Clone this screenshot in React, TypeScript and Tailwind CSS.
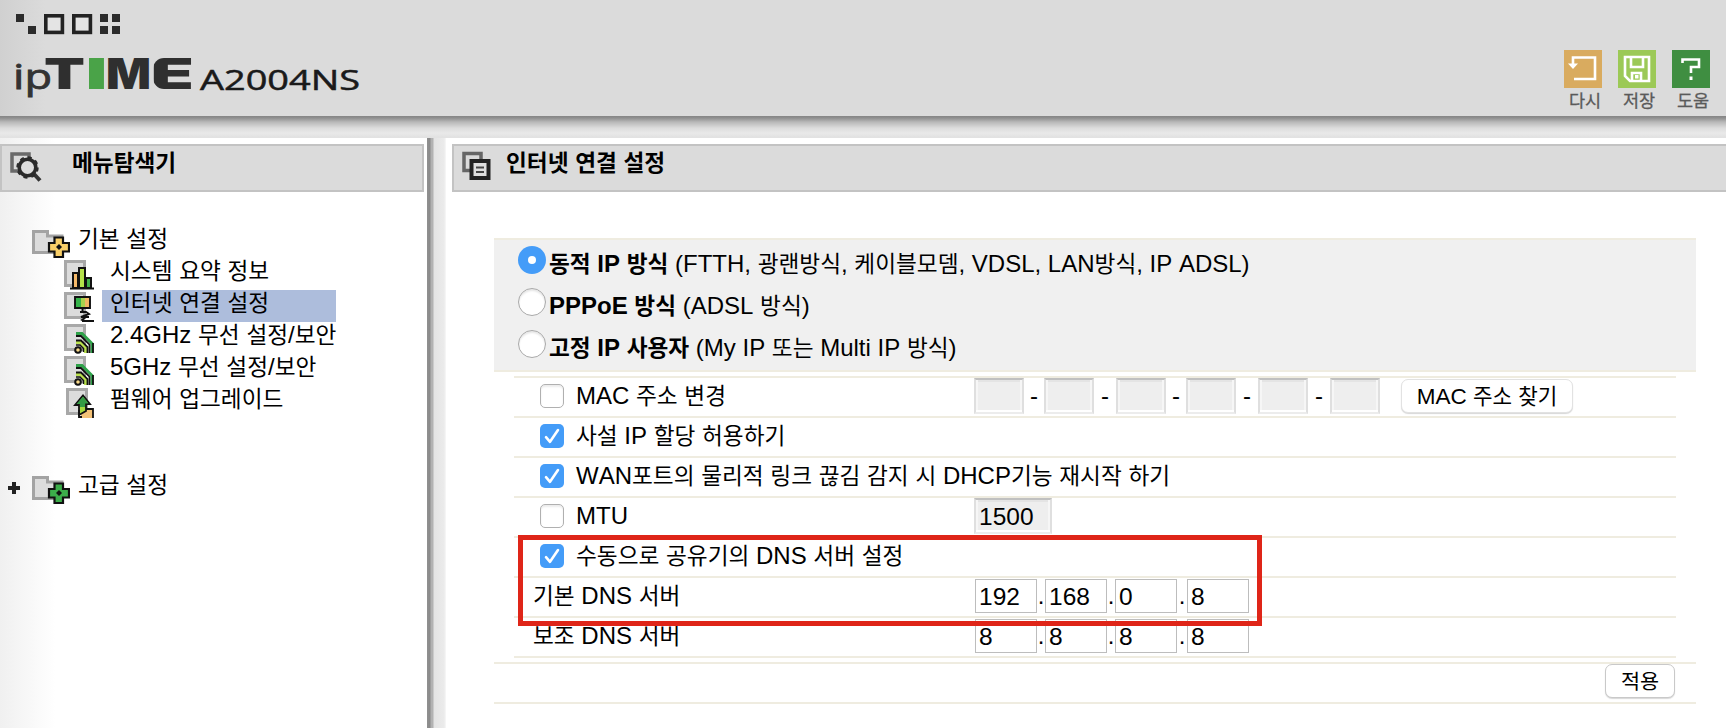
import type { ReactNode } from "react";

/* Hangul runs are set in Noto Sans CJK, slightly smaller than the Latin text beside them. */
function T({ children }: { children: string }) {
  return (
    <>
      {children.split(/([가-힣]+)/).map((part, i) =>
        i % 2 ? (
          <span key={i} className="font-['Noto_Sans_CJK_KR',sans-serif] text-[0.944em] leading-[0]">
            {part}
          </span>
        ) : (
          part
        ),
      )}
    </>
  );
}

function Logo() {
  return (
    <svg width="380" height="104" viewBox="0 0 380 104" className="block">
      <clipPath id="logo-e">
        <rect x="153" y="58" width="60" height="31" rx="11" />
      </clipPath>
      <g fill="#2b2b2b">
        <rect x="16" y="14" width="8" height="8" />
        <rect x="28" y="26" width="8" height="8" />
        <rect x="100" y="14" width="8" height="8" />
        <rect x="112" y="14" width="8" height="8" />
        <rect x="100" y="26" width="8" height="8" />
        <rect x="112" y="26" width="8" height="8" />
      </g>
      <g fill="#e4e4e4" stroke="#222" strokeWidth="3.6">
        <rect x="45.8" y="15.8" width="16.6" height="16.6" />
        <rect x="73.8" y="15.8" width="16.6" height="16.6" />
      </g>
      <text
        x="13"
        y="89"
        fontFamily="'Open Sans', sans-serif"
        fontSize="34"
        fill="#333"
        stroke="#333"
        strokeWidth="0.8"
        textLength="39"
        lengthAdjust="spacingAndGlyphs"
      >
        ip
      </text>
      <g fontFamily="Inter, sans-serif" fontWeight="900" fontSize="42.5" fill="#2f2f2f">
        <text x="44" y="89" textLength="41" lengthAdjust="spacingAndGlyphs">T</text>
        <text x="85.5" y="89" textLength="22" lengthAdjust="spacingAndGlyphs" fill="#4aa348">I</text>
        <text x="106" y="89" textLength="45" lengthAdjust="spacingAndGlyphs">M</text>
        <text x="150.5" y="89" textLength="43.5" lengthAdjust="spacingAndGlyphs" clipPath="url(#logo-e)">E</text>
      </g>
      <text
        x="200"
        y="89.5"
        fontFamily="'Open Sans', sans-serif"
        fontSize="27.5"
        fill="#1a1a1a"
        stroke="#1a1a1a"
        strokeWidth="0.5"
        textLength="160"
        lengthAdjust="spacingAndGlyphs"
      >
        A2004NS
      </text>
    </svg>
  );
}

function Tool({ label, color, children }: { label: string; color: string; children: ReactNode }) {
  return (
    <div className="flex w-[38px] flex-col items-center">
      <svg width="38" height="38" viewBox="0 0 38 38" fill="none" stroke="#fff" strokeWidth="2.6">
        <rect width="38" height="38" fill={color} stroke="none" />
        {children}
      </svg>
      <span className="mt-0.5 ml-1 font-['Noto_Sans_CJK_KR',sans-serif] text-[17.5px] leading-5 whitespace-nowrap text-[#5a5a5a] [-webkit-text-stroke:0.3px_#5a5a5a]">
        {label}
      </span>
    </div>
  );
}

function Folder({ color }: { color: string }) {
  return (
    <svg width="38" height="28" viewBox="0 0 38 28" className="mt-1 shrink-0">
      <path d="M1.5 1.5H15.5V6H30V22.5H1.5Z" fill="#dcdcdc" stroke="#a3a3a3" strokeWidth="3" />
      <path
        d="M22.5 7.5H31V13H37V21.5H31V27H22.5V21.5H17V13H22.5Z"
        fill={color}
        stroke="#111"
        strokeWidth="2.2"
      />
      <path d="M27 14L30 17L27 20L24 17Z" fill="#111" />
    </svg>
  );
}

function Leaf({ kind }: { kind: string }) {
  const dx = kind === "up" ? 2 : 0;
  return (
    <svg width="30" height="32" viewBox="0 0 30 32" className="shrink-0">
      <rect x={1.5 + dx} y="3.5" width="19" height="24" fill="#dcdcdc" stroke="#a8a8a8" strokeWidth="3" />
      {kind === "bars" && (
        <g stroke="#111" strokeWidth="2">
          <rect x="9" y="15" width="5" height="15" fill="#f5b96a" />
          <rect x="15" y="10" width="6" height="20" fill="#b4e24a" />
          <rect x="22" y="20" width="5" height="10" fill="#3fae49" />
          <path d="M6 30.5H30" />
        </g>
      )}
      {kind === "net" && (
        <>
          <rect x="11" y="7" width="15" height="11" fill="#f2b763" />
          <rect x="11" y="7" width="6" height="11" fill="#35b34a" />
          <rect x="17" y="7" width="4" height="11" fill="#a9d44e" />
          <path
            d="M11 7H26V18H11ZM18.5 18V21M16 22H22L25 24L17 27H25M20 31L18 30L21 28M18 31H30"
            fill="none"
            stroke="#111"
            strokeWidth="1.9"
          />
        </>
      )}
      {kind === "wifi" && (
        <g fill="none">
          <path d="M12 11.5H18L28 21.5V31" stroke="#2fa24a" strokeWidth="3" />
          <path d="M12 14H17L25.500 22.500V31M29 21V31" stroke="#111" strokeWidth="1.800" />
          <path d="M12 20.500H16.500L21.500 25.500V31" stroke="#b9e04f" strokeWidth="3.200" />
          <path d="M12 18.500H17L23.500 25V31" stroke="#111" strokeWidth="1.800" />
          <path d="M12 23H16L19.500 26.500V30" stroke="#111" strokeWidth="1.500" />
          <circle cx="14" cy="28" r="2.800" fill="#f8d98a" stroke="#111" strokeWidth="2" />
        </g>
      )}
      {kind === "up" && (
        <>
          <path d="M22 22H29V32H17V26Z" fill="#f4c277" />
          <path d="M15 29V19H11L19 9.5L26 18H22V25Z" fill="#a5d83f" stroke="#111" strokeWidth="1.8" />
          <path d="M12.5 18L19 10.5L24.5 17.5H21V21H16V18Z" fill="#349b45" />
          <path d="M15 24V31H18M22 23H29V32" fill="none" stroke="#111" strokeWidth="1.8" />
        </>
      )}
    </svg>
  );
}

function MenuRow({ kind, label, active }: { kind: string; label: string; active?: boolean }) {
  return (
    <div className="flex h-8 items-start pl-16 leading-[25px]">
      <Leaf kind={kind} />
      <div className={`ml-2 h-8 w-[234px] pl-2 whitespace-nowrap ${active ? "bg-[#adbddc]" : ""}`}>
        <T>{label}</T>
      </div>
    </div>
  );
}

function Radio({ checked, title, note }: { checked?: boolean; title: string; note: string }) {
  return (
    <label className="flex h-[42px] items-start pl-6 leading-[41px] whitespace-pre">
      <span
        className={`mt-[3px] mr-[3px] flex size-7 items-center justify-center rounded-full ${
          checked ? "bg-[#449cf8]" : "border border-[#a9a9a9] bg-white shadow-[inset_0_2px_2px_#e6e6e6]"
        }`}
      >
        {checked && <span className="size-2 rounded-full bg-white" />}
      </span>
      <b>
        <T>{title}</T>
      </b>
      <span>
        <T>{" " + note}</T>
      </span>
    </label>
  );
}

function Check({ checked, label }: { checked?: boolean; label: string }) {
  return (
    <label className="flex w-[460px] shrink-0 items-start pl-[26px] whitespace-nowrap">
      <span
        className={`mt-1.5 mr-3 size-6 shrink-0 rounded-[5px] ${
          checked ? "bg-[#449cf8]" : "border border-[#b0b0b0] bg-white shadow-[inset_0_2px_2px_#ececec]"
        }`}
      >
        {checked && (
          <svg width="24" height="24" viewBox="0 0 24 24" fill="none" stroke="#fff" strokeWidth="2.6">
            <path d="M6 13.2L10 17.8L18 6" strokeLinecap="round" strokeLinejoin="round" />
          </svg>
        )}
      </span>
      <span>
        <T>{label}</T>
      </span>
    </label>
  );
}

function Row({ children }: { children: ReactNode }) {
  return <div className="flex h-10 items-start border-t-2 border-[#efece0] leading-[35px]">{children}</div>;
}

const disabledBox =
  "h-9 shrink-0 border-2 border-t-[#c0c0c0] border-x-[#dfdfdf] border-b-[#ececec] bg-[#eeeeee] shadow-[inset_0_-2px_0_#fff,inset_2px_0_0_#f6f6f6,inset_-2px_0_0_#f6f6f6,inset_0_2px_0_#e4e4e4]";

function Address({ label, parts }: { label: string; parts: string[] }) {
  const gaps = ["w-2", "w-2", "w-[10px]"];
  return (
    <Row>
      <div className="w-[461px] pl-[19px]">
        <T>{label}</T>
      </div>
      {parts.map((p, i) => (
        <div key={i} className="flex">
          <div className="mt-px h-[34px] w-[62px] border border-[#bdbdbd] bg-white pl-[3px] text-[24.5px] leading-[34px]">
            {p}
          </div>
          {i < 3 && <span className={`flex justify-center ${gaps[i]}`}>.</span>}
        </div>
      ))}
    </Row>
  );
}

function Button({ label, className }: { label: string; className: string }) {
  return (
    <button
      className={`shrink-0 rounded-[7px] border bg-white text-center whitespace-nowrap shadow-[0_1px_1px_#d8d8d8] ${className}`}
    >
      <T>{label}</T>
    </button>
  );
}

const titleBar = "flex h-12 items-start border-2 border-[#c3c3c3] bg-[#dbdbdb] font-bold leading-[25px]";

export default function App() {
  return (
    <div className="flex h-[728px] w-[1726px] flex-col overflow-hidden bg-white font-['Liberation_Sans','Noto_Sans_CJK_KR',sans-serif] text-[24px] text-black [font-kerning:none]">
      <header className="flex h-[116px] shrink-0 justify-between bg-[linear-gradient(90deg,#d0d0d0_0,#dbdbdb_45px)]">
        <Logo />
        <div className="mt-[50px] mr-4 flex gap-4">
          <Tool label="다시" color="#d9ab5f">
            <path d="M9 14V7.5H31V29H10" />
            <path d="M4 13.5H14L9 19Z" fill="#fff" stroke="none" />
          </Tool>
          <Tool label="저장" color="#9cc957">
            <path d="M7 7H31V31H12L7 26Z" />
            <path d="M13 7V17H25V7M14 31V23H23V31" />
            <rect x="17" y="25" width="3.5" height="3.5" fill="#fff" stroke="none" />
          </Tool>
          <Tool label="도움" color="#3f8e41">
            <path d="M10.5 13V9.5H27V17H19V23" />
            <path d="M19 26.5V30" strokeWidth="3" />
          </Tool>
        </div>
      </header>
      <div className="h-[22px] shrink-0 bg-[linear-gradient(180deg,#858585_0,#8f8f8f_2px,#b8b8b8_6px,#dcdcdc_12px,#e9e9e9_17px,#e2e2e2_21px)]" />

      <div className="flex min-h-0 flex-1">
        <nav className="w-[427px] shrink-0 bg-[linear-gradient(90deg,#f0f0f0_0,#ffffff_55px)] pt-1.5">
          <div className={`${titleBar} w-[424px]`}>
            <svg width="34" height="32" viewBox="0 0 34 32" className="mt-1.5 ml-[7px]" fill="none">
              <rect x="3" y="2" width="17" height="17" stroke="#6a6a6a" strokeWidth="3.5" />
              <path d="M25 22L31 28.5" stroke="#333" strokeWidth="4" />
              <circle cx="18.5" cy="15.5" r="8.3" fill="#dedede" stroke="#2b2b2b" strokeWidth="3.6" />
              <circle cx="18.5" cy="15.5" r="10.3" stroke="#2b2b2b" strokeWidth="1.8" strokeDasharray="4 4.09" />
            </svg>
            <span className="mt-1 ml-[29px]">
              <T>메뉴탐색기</T>
            </span>
          </div>
          <div className="mt-[34px] flex h-8 items-start pl-8 leading-[25px]">
            <Folder color="#f9cf68" />
            <span className="ml-2">
              <T>기본 설정</T>
            </span>
          </div>
          <MenuRow kind="bars" label="시스템 요약 정보" />
          <MenuRow kind="net" label="인터넷 연결 설정" active />
          <MenuRow kind="wifi" label="2.4GHz 무선 설정/보안" />
          <MenuRow kind="wifi" label="5GHz 무선 설정/보안" />
          <MenuRow kind="up" label="펌웨어 업그레이드" />
          <div className="mt-[54px] flex h-8 items-start pl-[7px] leading-[25px]">
            <svg width="25" height="32" viewBox="0 0 25 32">
              <path d="M1 16H13M7 10V22" stroke="#222" strokeWidth="4" />
            </svg>
            <Folder color="#3cae4a" />
            <span className="ml-2">
              <T>고급 설정</T>
            </span>
          </div>
        </nav>

        <div className="w-[19px] shrink-0 bg-[linear-gradient(90deg,#909090_0,#8a8a8a_3px,#b2b2b2_4px,#b2b2b2_6px,#e4e4e4_7px,#ebebeb_17px,#f8f8f8_19px)]" />

        <main className="min-w-0 flex-1 pt-1.5 pl-[6px]">
          <div className={`${titleBar} border-r-0`}>
            <svg width="30" height="30" viewBox="0 0 30 30" className="mt-[5px] ml-2" fill="none">
              <rect x="2" y="2.5" width="17" height="17" stroke="#666" strokeWidth="3.5" />
              <rect x="9.5" y="10" width="17" height="17" fill="#dedede" stroke="#222" strokeWidth="4" />
              <path d="M14 16.5H22M14 21H22" stroke="#444" strokeWidth="2" />
            </svg>
            <span className="mt-1 ml-[14px]">
              <T>인터넷 연결 설정</T>
            </span>
          </div>

          <section className="mt-[46px] ml-[42px] w-[1202px]">
            <div className="h-[134px] border-y-2 border-[#efece0] bg-[#f0f0f0] pt-[3px]">
              <Radio checked title="동적 IP 방식" note="(FTTH, 광랜방식, 케이블모뎀, VDSL, LAN방식, IP ADSL)" />
              <Radio title="PPPoE 방식" note="(ADSL 방식)" />
              <Radio title="고정 IP 사용자" note="(My IP 또는 Multi IP 방식)" />
            </div>

            <div className="relative mx-5 mt-1 border-b-2 border-[#efece0]">
              <Row>
                <Check label="MAC 주소 변경" />
                {["w-5", "w-[22px]", "w-5", "w-[22px]", "w-[22px]", "w-[21px]"].map((gap, i) => (
                  <div key={i} className="flex">
                    <div className={`${disabledBox} w-[50px]`} />
                    {i < 5 ? <span className={`flex justify-center ${gap}`}>-</span> : <span className={gap} />}
                  </div>
                ))}
                <Button
                  label="MAC 주소 찾기"
                  className="mt-px h-[34px] w-[172px] border-[#e2e2e2] text-[22.5px] leading-[33px]"
                />
              </Row>
              <Row>
                <Check checked label="사설 IP 할당 허용하기" />
              </Row>
              <Row>
                <Check checked label="WAN포트의 물리적 링크 끊김 감지 시 DHCP기능 재시작 하기" />
              </Row>
              <Row>
                <Check label="MTU" />
                <div className={`${disabledBox} w-[78px] pl-[3px] text-[24.5px] leading-[34px]`}>1500</div>
              </Row>
              <Row>
                <Check checked label="수동으로 공유기의 DNS 서버 설정" />
              </Row>
              <Address label="기본 DNS 서버" parts={["192", "168", "0", "8"]} />
              <Address label="보조 DNS 서버" parts={["8", "8", "8", "8"]} />
              <div className="absolute top-[159px] left-1 h-[91px] w-[744px] border-[5px] border-[#df2518]" />
            </div>

            <div className="mt-1 flex h-[42px] justify-end border-y-2 border-[#efece0] pr-[21px]">
              <Button label="적용" className="h-[34px] w-[70px] border-[#c9c9c9] text-[22px] leading-[34px]" />
            </div>
          </section>
        </main>
      </div>
    </div>
  );
}
